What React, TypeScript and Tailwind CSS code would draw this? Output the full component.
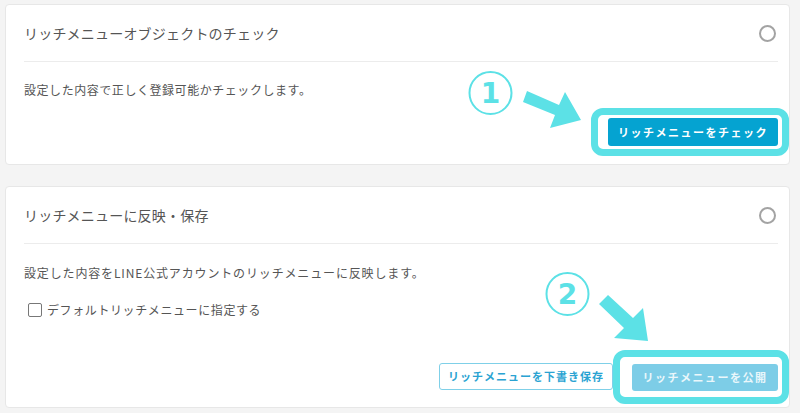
const font = { fontFamily: '"Noto Sans CJK JP", "Noto Sans", sans-serif' };

const Radio = () => (
  <span className="w-[17px] h-[17px] rounded-full border-2 border-[#a3a3a3] mr-[2px]" />
);

const CardHeader = ({ title }: { title: string }) => (
  <div className="h-[57px] flex items-center justify-between border-b border-[#ececec]">
    <h2 className="text-[14px] leading-[20px] tracking-[0.2px] text-[#555]">{title}</h2>
    <Radio />
  </div>
);

const Overlay = () => (
  <svg
    className="absolute inset-0 pointer-events-none"
    width="800"
    height="413"
    viewBox="0 0 800 413"
  >
    <circle cx="490.5" cy="93" r="21" fill="none" stroke="#5ce1e6" strokeWidth="2" />
    <text
      x="490.5"
      y="103"
      textAnchor="middle"
      fontFamily="'DejaVu Sans', sans-serif"
      fontWeight="700"
      fontSize="28"
      fill="#5ce1e6"
    >
      1
    </text>
    <polygon
      points="527,91 559,105 565,92 581,120 550,128 555,115 523,102"
      fill="#5ce1e6"
    />

    <circle cx="567.5" cy="294" r="21" fill="none" stroke="#5ce1e6" strokeWidth="2" />
    <text
      x="567.5"
      y="304"
      textAnchor="middle"
      fontFamily="'DejaVu Sans', sans-serif"
      fontWeight="700"
      fontSize="28"
      fill="#5ce1e6"
    >
      2
    </text>
    <polygon
      points="608,295 633,318 643,308 648,341 614,338 624,328 599,304"
      fill="#5ce1e6"
    />
  </svg>
);

export default function App() {
  return (
    <div
      className="relative w-[800px] h-[413px] overflow-hidden bg-[#f4f4f4] pt-[4px] pl-[5px] pr-[10px]"
      style={font}
    >
      <div className="flex flex-col gap-[21px]">
        {/* check */}
        <section className="h-[161px] bg-white rounded-[4px] border border-[#e7e7e7] pl-[18px] pr-[11px]">
          <CardHeader title="リッチメニューオブジェクトのチェック" />
          <p className="pt-[19px] text-[12px] leading-[18px] tracking-[0.55px] text-[#555]">
            設定した内容で正しく登録可能かチェックします。
          </p>
          <div className="flex justify-end mt-[19px]">
            <div className="relative">
              <button className="w-[170px] h-[28px] rounded-[3px] bg-[#05a3d1] text-white text-[11px] font-bold tracking-[1.5px]">
                リッチメニューをチェック
              </button>
              <div className="absolute -left-[17px] -right-[11px] -top-[10px] -bottom-[10px] border-[7px] border-[#5ce1e6] rounded-[12px]" />
            </div>
          </div>
        </section>

        {/* publish */}
        <section className="h-[222px] bg-white rounded-[4px] border border-[#e7e7e7] pl-[18px] pr-[11px]">
          <CardHeader title="リッチメニューに反映・保存" />
          <p className="pt-[20px] text-[12px] leading-[18px] tracking-[0.85px] text-[#555]">
            設定した内容をLINE公式アカウントのリッチメニューに反映します。
          </p>
          <label className="flex items-center gap-[5px] mt-[19px] pl-[4px] h-[18px] text-[12px] tracking-[0.6px] text-[#555]">
            <span className="w-[14px] h-[14px] border-[1.5px] border-[#777] rounded-[2px]" />
            デフォルトリッチメニューに指定する
          </label>
          <div className="flex justify-end gap-[19px] mt-[44px]">
            <button className="w-[174px] h-[27px] rounded-[3px] border border-[#7fd0e8] bg-white text-[#2aa3d2] text-[11px] font-bold tracking-[1px]">
              リッチメニューを下書き保存
            </button>
            <div className="relative">
              <button className="w-[146px] h-[27px] rounded-[3px] bg-[#7dcde7] text-[#eaf7fb] text-[11px] font-bold tracking-[1.5px]">
                リッチメニューを公開
              </button>
              <div className="absolute -left-[19px] -right-[11px] -top-[13px] -bottom-[13px] border-[7px] border-[#5ce1e6] rounded-[12px]" />
            </div>
          </div>
        </section>
      </div>
      <Overlay />
    </div>
  );
}
